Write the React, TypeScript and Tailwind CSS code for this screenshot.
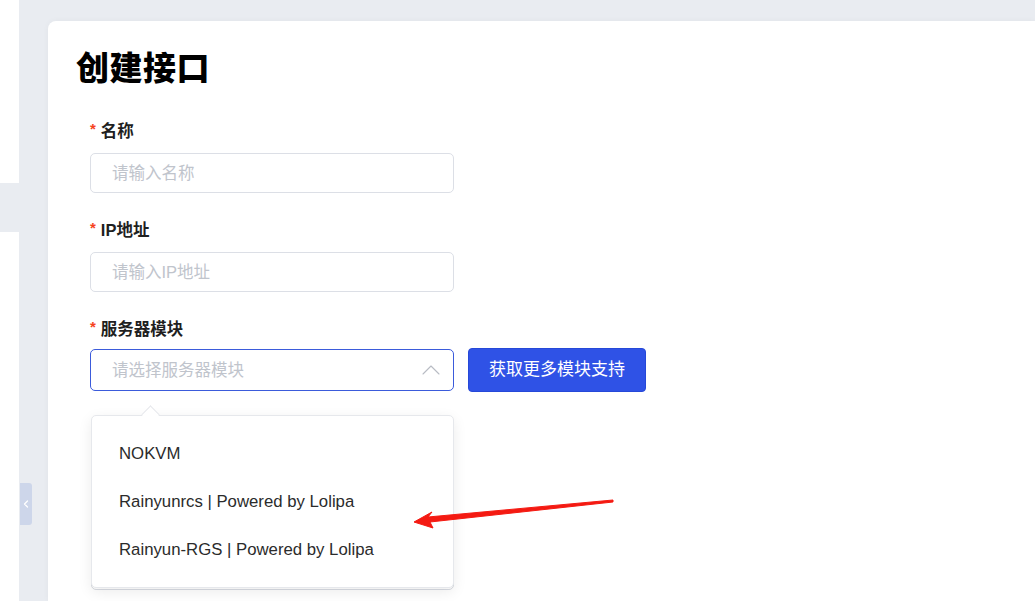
import React from 'react';
import { ChevronUp, ChevronLeft } from 'lucide-react';

const FONT = "font-['Liberation_Sans','Noto_Sans_CJK_SC',sans-serif]";

const Label: React.FC<{ text: string }> = ({ text }) => (
  <div className="flex items-center h-[22px] mb-[11px]">
    <span className="text-[#f5431d] text-[15px] font-bold mr-[5px] mt-[-3px]">*</span>
    <span className="text-[16.5px] font-bold text-[#1f1f1f]">{text}</span>
  </div>
);

const TextInput: React.FC<{ placeholder: string }> = ({ placeholder }) => (
  <div className="w-[364px] h-[40px] border border-[#dcdfe6] rounded-[5px] flex items-center px-[21px] text-[16.5px] text-[#c0c4cc]">
    {placeholder}
  </div>
);

const options = ['NOKVM', 'Rainyunrcs | Powered by Lolipa', 'Rainyun-RGS | Powered by Lolipa'];

const App: React.FC = () => {
  return (
    <div className={`relative w-[1035px] h-[601px] flex overflow-hidden bg-white ${FONT}`}>
      {/* sidebar edge */}
      <div className="w-[19px] flex flex-col bg-white">
        <div className="h-[183px]" />
        <div className="h-[49px] bg-[#e9ecf1]" />
      </div>

      {/* main area */}
      <div className="flex-1 flex flex-col bg-[#e9ecf1] pl-[29px] pt-[21px]">
        <div className="flex-1 bg-white rounded-tl-[8px] shadow-[0_0_6px_rgba(0,0,0,0.04)] pl-[28px] pt-[26px]">
          <h1 className="text-[33px] font-black text-black leading-[44px] tracking-[0.5px]">创建接口</h1>

          <div className="pl-[14px] pt-[29px] flex flex-col">
            <Label text="名称" />
            <TextInput placeholder="请输入名称" />

            <div className="h-[26px]" />
            <Label text="IP地址" />
            <TextInput placeholder="请输入IP地址" />

            <div className="h-[26px]" />
            <Label text="服务器模块" />
            <div className="flex items-center gap-[14px] mt-[-3px]">
              <div className="w-[364px] h-[42px] border border-[#3b5bdb] rounded-[5px] flex items-center justify-between pl-[21px] pr-[6px] text-[16.5px] text-[#c0c4cc]">
                <span>请选择服务器模块</span>
                <ChevronUp size={32} strokeWidth={0.8} className="text-[#b8bcc4]" />
              </div>
              <button className="w-[178px] h-[44px] bg-[#2f52e6] border border-[#2648d8] rounded-[4px] text-white text-[17px]">
                获取更多模块支持
              </button>
            </div>

            {/* dropdown */}
            <div className="relative mt-[23px] w-[363px] ml-[1px]">
              <div className="absolute left-[53px] top-[-7px] w-[13px] h-[13px] bg-white border-l border-t border-[#e6e8ec] rotate-45 z-10" />
              <div className="absolute left-0 right-0 top-[4px] h-[171px] rounded-[5px] border border-[#d8dbe2] bg-white" />
              <div className="relative bg-white border border-[#e6e8ec] rounded-[5px] shadow-[0_4px_14px_rgba(0,0,0,0.08)] pt-[14px] pb-[13px]">
                {options.map((o) => (
                  <div key={o} className="h-[48px] flex items-center pl-[27px] text-[16.75px] text-[#2b2b2b]">
                    {o}
                  </div>
                ))}
              </div>
            </div>
          </div>
        </div>
      </div>

      {/* collapse tab */}
      <div className="absolute left-[20px] top-[483px] w-[12px] h-[42px] bg-[#cdd6ea] rounded-r-[3px] flex items-center justify-center">
        <ChevronLeft size={14} strokeWidth={2.5} className="text-white" />
      </div>

      {/* annotation arrow */}
      <svg className="absolute left-0 top-0 pointer-events-none" width="1035" height="601">
        <path d="M613 500 L428 517 L432 512 L414 522 L433 528 L430 522 L613 502 Z" fill="#f41a12" stroke="#f41a12" strokeWidth="1" strokeLinejoin="round" />
      </svg>
    </div>
  );
};

export default App;
